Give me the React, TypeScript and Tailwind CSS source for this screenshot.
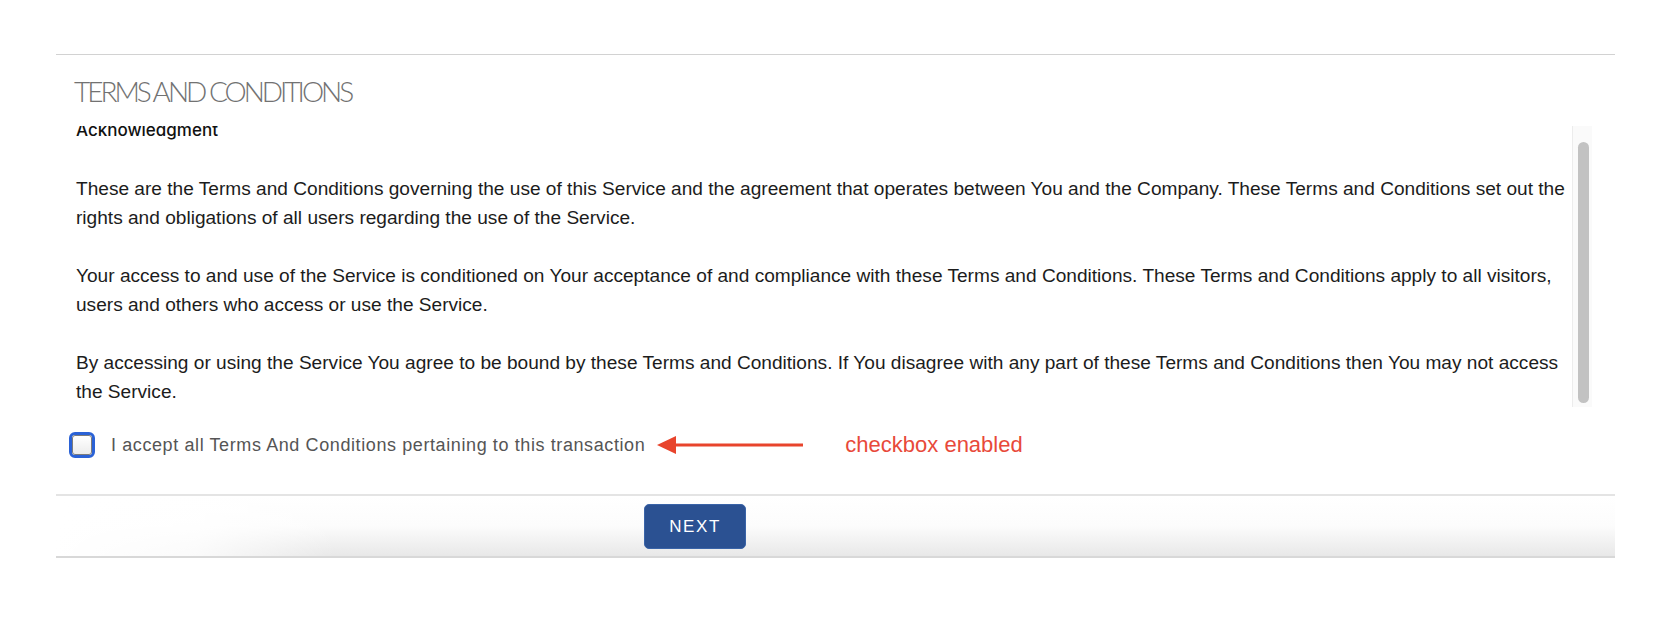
const paragraphs: string[][] = [
  [
    "These are the Terms and Conditions governing the use of this Service and the agreement that operates between You and the Company. These Terms and Conditions set out the",
    "rights and obligations of all users regarding the use of the Service.",
  ],
  [
    "Your access to and use of the Service is conditioned on Your acceptance of and compliance with these Terms and Conditions. These Terms and Conditions apply to all visitors,",
    "users and others who access or use the Service.",
  ],
  [
    "By accessing or using the Service You agree to be bound by these Terms and Conditions. If You disagree with any part of these Terms and Conditions then You may not access",
    "the Service.",
  ],
];

function Arrow() {
  return (
    <svg width="146" height="18" viewBox="0 0 146 18" className="shrink-0">
      <rect x="16" y="7.5" width="130" height="3" fill="#e8442c" />
      <polygon points="0,9 19,0 19,18" fill="#e8442c" />
    </svg>
  );
}

export default function App() {
  return (
    <div className="h-[631px] w-full overflow-hidden bg-white pt-[54px] font-['Liberation_Sans',Arial,sans-serif]">
      <div className="ml-[56px] w-[1559px] border-t border-[#d2d2d2]">
        <h1 className="mt-[22px] pl-[18px] font-['Lato',sans-serif] text-[28px] font-light uppercase leading-[28px] tracking-[-3px] text-[#727272]">
          Terms and Conditions
        </h1>

        <div className="mt-[21px] flex h-[281px] pr-[23px]">
          <div className="flex-1 overflow-hidden pl-[20px]">
            <div className="-mt-[10px] text-[19.1px] leading-[29px] text-[#1c1c1c]">
              <p className="mb-[29px] font-['Inter',sans-serif] text-[17px] font-medium text-[#111]">
                Acknowledgment
              </p>
              {paragraphs.map((lines, i) => (
                <p key={i} className="mb-[29px] last:mb-0">
                  {lines.map((line, j) => (
                    <span key={j} className="block whitespace-nowrap">
                      {line}
                    </span>
                  ))}
                </p>
              ))}
            </div>
          </div>
          <div className="w-[20px] border-l border-[#ececec] bg-[#fafafa] pb-[4px] pl-[5px] pr-[4px] pt-[16px]">
            <div className="h-full w-[11px] rounded-full bg-[#c2c2c2]" />
          </div>
        </div>

        <div className="mt-[25px] flex items-center pl-[13px]">
          <div className="h-[26px] w-[26px] shrink-0 rounded-[6px] border-[3px] border-[#2b62d6]">
            <div className="h-full w-full rounded-[3px] border border-[#7c7c7c] bg-linear-to-b from-white to-[#ececec]" />
          </div>
          <span className="ml-[16px] whitespace-nowrap text-[18px] leading-[26px] tracking-[0.6px] text-[#555]">
            I accept all Terms And Conditions pertaining to this transaction
          </span>
          <div className="ml-[12px] flex items-center">
            <Arrow />
          </div>
          <span className="ml-[42px] whitespace-nowrap text-[22px] leading-[26px] text-[#e8493a]">
            checkbox enabled
          </span>
        </div>

        <div className="relative mt-[36px] h-[64px] border-y-2 border-t-[#e4e4e4] border-b-[#d8d8d8] bg-linear-to-b from-white via-[#fcfcfc] to-[#e8e8e8]">
          <div className="absolute inset-y-0 left-0 w-[280px] bg-linear-to-r from-white via-white/80 to-transparent" />
          <button className="relative ml-[588px] mt-[8px] h-[45px] w-[102px] rounded-[5px] border border-[#3a64a8] bg-[#2b5192] text-[17px] font-medium tracking-[1.6px] text-white">
            NEXT
          </button>
        </div>
      </div>
    </div>
  );
}
